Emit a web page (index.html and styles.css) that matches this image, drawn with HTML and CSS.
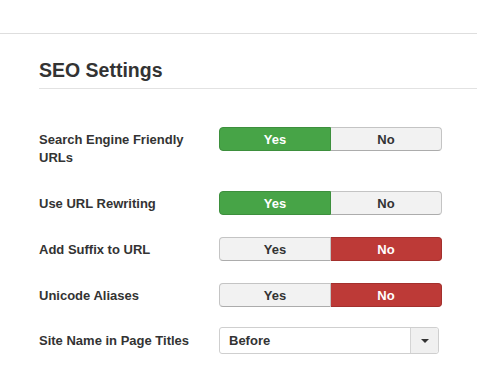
FILE: index.html
```html
<!DOCTYPE html>
<html>
<head>
<meta charset="utf-8">
<link rel="stylesheet" href="styles.css">
</head>
<body>
<div class="topbar"></div>
<div class="content">
  <h2 class="legend">SEO Settings</h2>
  <div class="group">
    <div class="label">Search Engine Friendly URLs</div>
    <div class="btn-group">
      <span class="btn yes-on">Yes</span><span class="btn off">No</span>
    </div>
  </div>
  <div class="group">
    <div class="label">Use URL Rewriting</div>
    <div class="btn-group">
      <span class="btn yes-on">Yes</span><span class="btn off">No</span>
    </div>
  </div>
  <div class="group">
    <div class="label">Add Suffix to URL</div>
    <div class="btn-group">
      <span class="btn off">Yes</span><span class="btn no-on">No</span>
    </div>
  </div>
  <div class="group">
    <div class="label">Unicode Aliases</div>
    <div class="btn-group">
      <span class="btn off">Yes</span><span class="btn no-on">No</span>
    </div>
  </div>
  <div class="group select-group">
    <div class="label">Site Name in Page Titles</div>
    <div class="select">
      <span class="select-text">Before</span>
      <span class="select-arrow"><span class="caret"></span></span>
    </div>
  </div>
</div>
</body>
</html>
```
FILE: styles.css
```css
html, body {
  margin: 0;
  padding: 0;
  background: #fff;
}
body {
  font-family: "Liberation Sans", Arial, sans-serif;
  color: #333;
  width: 477px;
  height: 373px;
  overflow: hidden;
}
.topbar {
  height: 33px;
  border-bottom: 1px solid #dedede;
}
.content {
  padding-left: 39px;
}
.legend {
  margin: 24px 0 38px 0;
  font-size: 19.5px;
  line-height: 24px;
  font-weight: bold;
  padding-bottom: 6px;
  border-bottom: 1px solid #e2e2e2;
  color: #333;
}
.group {
  display: flex;
  align-items: flex-start;
  margin-bottom: 22px;
}
.label {
  width: 165px;
  margin-right: 15px;
  padding: 4px 0 2px 0;
  font-size: 13px;
  line-height: 18px;
  font-weight: bold;
  color: #333;
}
.btn-group {
  display: flex;
  width: 223px;
}
.btn {
  flex: 1;
  box-sizing: border-box;
  height: 24px;
  line-height: 23px;
  text-align: center;
  font-size: 13px;
  font-weight: bold;
  border: 1px solid #b8b8b8;
}
.btn:first-child {
  border-radius: 4px 0 0 4px;
}
.btn:last-child {
  border-radius: 0 4px 4px 0;
  border-left: none;
}
.off {
  background: #f2f2f2;
  color: #333;
  border-color: #c4c4c4 #c4c4c4 #acacac;
}
.yes-on {
  background: #47a447;
  border-color: #3d8f3d;
  color: #fff;
}
.no-on {
  background: #bd3a37;
  border-color: #a3302d;
  color: #fff;
}
.select-group {
  margin-top: -2px;
}
.select-group .label {
  padding-top: 5px;
}
.select {
  display: flex;
  box-sizing: border-box;
  width: 220px;
  height: 27px;
  border: 1px solid #cfcfcf;
  border-radius: 3px;
  background: #fff;
}
.select-text {
  flex: 1;
  padding-left: 9px;
  line-height: 26px;
  font-size: 13px;
  font-weight: bold;
  color: #333;
}
.select-arrow {
  width: 27px;
  border-left: 1px solid #d4d4d4;
  background: #f0f0f0;
  display: flex;
  align-items: center;
  justify-content: center;
  border-radius: 0 3px 3px 0;
}
.caret {
  width: 0;
  height: 0;
  border-left: 4px solid transparent;
  border-right: 4px solid transparent;
  border-top: 4px solid #333;
}
```
